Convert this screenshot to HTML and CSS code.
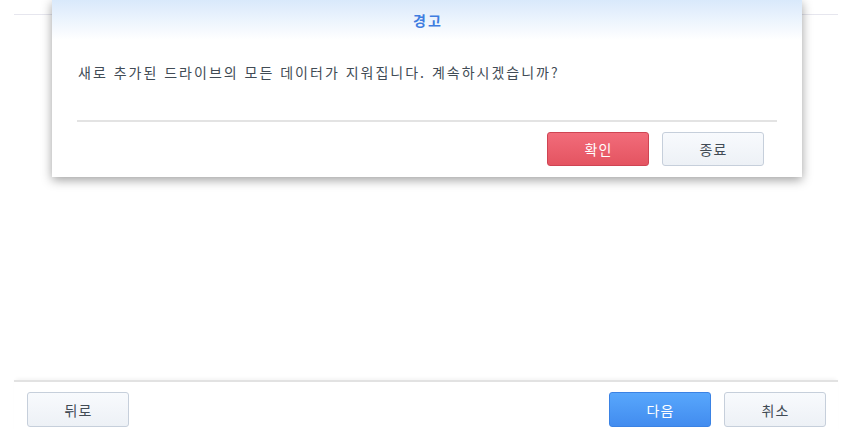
FILE: index.html
```html
<!DOCTYPE html>
<html lang="ko">
<head>
<meta charset="utf-8">
<link rel="stylesheet" href="styles.css">
</head>
<body>
<div class="page">
  <div class="top-rule"></div>
  <div class="spacer"></div>
  <div class="footer">
    <button class="btn btn-light">뒤로</button>
    <div class="footer-right">
      <button class="btn btn-blue">다음</button>
      <button class="btn btn-light">취소</button>
    </div>
  </div>
</div>

<div class="dialog">
  <div class="dialog-header">경고</div>
  <div class="dialog-body">새로 추가된 드라이브의 모든 데이터가 지워집니다. 계속하시겠습니까?</div>
  <div class="dialog-sep"></div>
  <div class="dialog-footer">
    <button class="btn btn-red">확인</button>
    <button class="btn btn-light">종료</button>
  </div>
</div>
</body>
</html>
```

FILE: styles.css
```css
* { box-sizing: border-box; }
html, body { margin: 0; padding: 0; background: #fff; }
body {
  font-family: "Noto Sans CJK KR", "Noto Sans", sans-serif;
  font-size: 14px;
  letter-spacing: 1px;
  color: #414b55;
  width: 851px;
  height: 434px;
  overflow: hidden;
  position: relative;
}
.page {
  height: 434px;
  display: flex;
  flex-direction: column;
  padding: 14px 13px 0 14px;
}
.top-rule {
  height: 1px;
  background: #e6e6ee;
}
.spacer { flex: 1; }
.footer {
  border-top: 2px solid #e2e2e2;
  box-shadow: 0 -3px 4px -2px rgba(0,0,0,0.06);
  display: flex;
  justify-content: space-between;
  padding: 10px 12px 7px 13px;
}
.footer-right {
  display: flex;
  gap: 13px;
}
.btn {
  width: 102px;
  height: 35px;
  border-radius: 3px;
  font-family: "Noto Sans CJK KR", "Noto Sans", sans-serif;
  font-size: 14px;
  letter-spacing: 1px;
  line-height: 1;
  padding: 0 0 0 1px;
  cursor: pointer;
}
.btn-light {
  background: linear-gradient(#f8fafd, #edf1f6);
  border: 1px solid #c6cfdb;
  color: #414b55;
}
.btn-blue {
  background: linear-gradient(#58a7fc, #428cef);
  border: 1px solid #3a82e4;
  color: #fff;
}
.btn-red {
  background: linear-gradient(#f26c7a, #e45461);
  border: 1px solid #cf4453;
  color: #fff;
}
.dialog {
  position: absolute;
  left: 52px;
  top: 0;
  width: 750px;
  background: #fff;
  box-shadow: 0 3px 10px rgba(0,0,0,0.38);
}
.dialog-header {
  height: 40px;
  background: linear-gradient(#d9e9fb, #ffffff);
  text-align: center;
  line-height: 40px;
  font-size: 14px;
  font-weight: 700;
  letter-spacing: 2px;
  padding-left: 2px;
  color: #3f7de0;
}
.dialog-body {
  padding: 22px 25px 0 26px;
  line-height: 20px;
  height: 80px;
  letter-spacing: 2px;
  color: #414b55;
}
.dialog-sep {
  margin: 0 25px;
  height: 2px;
  background: #e3e3e3;
  box-shadow: 0 -2px 3px -1px rgba(0,0,0,0.05);
}
.dialog-footer {
  display: flex;
  justify-content: flex-end;
  gap: 13px;
  padding: 10px 38px 11px 0;
}
.dialog-footer .btn { height: 34px; }
```
